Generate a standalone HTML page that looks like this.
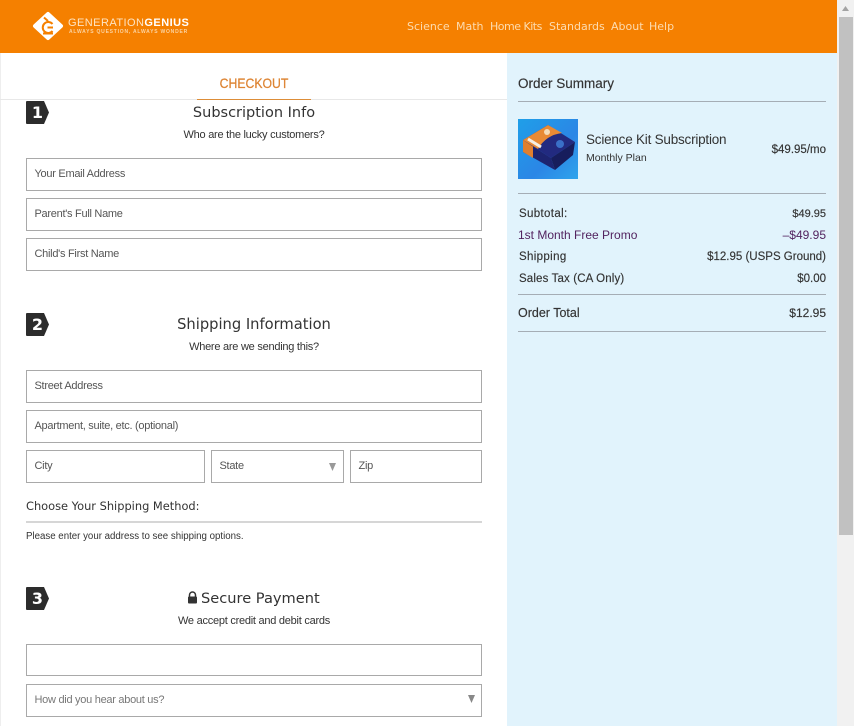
<!DOCTYPE html>
<html><head><meta charset="utf-8"><title>Checkout</title>
<style>
html,body{margin:0;padding:0;width:854px;height:726px;overflow:hidden;background:#fff;font-family:"Liberation Sans",sans-serif;color:#333}
.a{position:absolute;white-space:nowrap}
.inp{position:absolute;box-sizing:border-box;height:33px;border:1px solid #a9a9a9;background:#fff;font-size:11px;letter-spacing:-.28px;line-height:30px;padding-left:7.5px;color:#555}
.d{line-height:31px}
.h{position:absolute;left:0;width:508px;text-align:center;font-family:"DejaVu Sans",sans-serif;font-size:14.5px;color:#333;white-space:nowrap}
.s{position:absolute;left:0;width:508px;text-align:center;font-size:11px;letter-spacing:-.25px;color:#333;white-space:nowrap}
.nav{position:absolute;top:20px;font-family:"DejaVu Sans",sans-serif;font-size:11px;color:#fddcb0;white-space:nowrap}
.ln{position:absolute;left:518px;width:308px;height:1px;background:#a5adb5}
.l{position:absolute;left:519px;font-size:11.5px;letter-spacing:.35px;color:#333;white-space:nowrap;-webkit-text-stroke:.15px #333}
.r{position:absolute;right:28px;font-size:11.5px;color:#333;white-space:nowrap;-webkit-text-stroke:.15px #333}
</style></head><body>
<div class="a" style="left:0;top:0;width:1px;height:726px;background:#eee"></div>
<div class="a" style="left:507px;top:53px;width:330px;height:673px;background:#e1f3fc"></div>
<div class="a" style="left:0;top:0;width:837px;height:53px;background:#f58000"></div>
<div class="a" style="left:837px;top:0;width:17px;height:726px;background:#f1f1f1"></div>
<div class="a" style="left:839px;top:17px;width:14px;height:518px;background:#c1c1c1"></div>
<svg class="a" style="left:837px;top:0" width="17" height="17"><path d="M5 11L8.500 6L12 11Z" fill="#a3a3a3"/></svg>

<svg class="a" style="left:32px;top:11px" width="32" height="30" viewBox="0 0 32 30"><path d="M16 3L29 15L16 27L3 15Z" fill="#fff" stroke="#fff" stroke-width="4" stroke-linejoin="round"/><path d="M12 6.500L16 10M20.500 13A5.500 5.500 0 1 0 20.500 20M15.500 16.500H21M11 22.500H21" fill="none" stroke="#f58000" stroke-width="2"/></svg>
<div class="a" style="left:68px;top:16px;font-size:11px;line-height:14px;letter-spacing:.45px;color:#fff"><span style="color:#fde3c2">GENERATION</span><b>GENIUS</b></div>
<div class="a" style="left:69px;top:29px;font-size:5px;line-height:7px;letter-spacing:.78px;font-weight:bold;color:#fbd3a2">ALWAYS QUESTION, ALWAYS WONDER</div>
<div class="nav" style="left:407px">Science</div>
<div class="nav" style="left:456px">Math</div>
<div class="nav" style="left:490px;letter-spacing:-.5px">Home Kits</div>
<div class="nav" style="left:549px">Standards</div>
<div class="nav" style="left:611px">About</div>
<div class="nav" style="left:649px">Help</div>

<div class="a" style="left:0;top:99px;width:507px;height:1px;background:#e8e8e8"></div>
<div class="a" style="left:197px;top:99px;width:114px;height:1px;background:#dd8d38"></div>
<div class="a" style="left:197px;top:75px;width:114px;text-align:center;font-size:14px;line-height:16px;color:#dd8433;transform:scaleX(.875);-webkit-text-stroke:.25px #dd8433">CHECKOUT</div>

<svg class="a" style="left:26px;top:101px" width="24" height="23"><path d="M1 0H18L23 11.500L18 23H1Q0 23 0 22V1Q0 0 1 0Z" fill="#2c2c2c"/></svg>
<div class="a" style="left:26px;top:101px;width:23px;text-align:center;font:bold 16px/23px 'DejaVu Sans',sans-serif;color:#fff">1</div>
<div class="h" style="top:104px;line-height:18px">Subscription Info</div>
<div class="s" style="top:128px;line-height:14px">Who are the lucky customers?</div>
<div class="inp" style="left:26px;top:158px;width:456px">Your Email Address</div>
<div class="inp d" style="left:26px;top:198px;width:456px">Parent's Full Name</div>
<div class="inp d" style="left:26px;top:238px;width:456px">Child's First Name</div>

<svg class="a" style="left:26px;top:313px" width="24" height="23"><path d="M1 0H18L23 11.500L18 23H1Q0 23 0 22V1Q0 0 1 0Z" fill="#2c2c2c"/></svg>
<div class="a" style="left:26px;top:313px;width:23px;text-align:center;font:bold 16px/23px 'DejaVu Sans',sans-serif;color:#fff">2</div>
<div class="h" style="top:316px;line-height:18px;font-size:14.7px">Shipping Information</div>
<div class="s" style="top:340px;line-height:14px">Where are we sending this?</div>
<div class="inp" style="left:26px;top:370px;width:456px">Street Address</div>
<div class="inp d" style="left:26px;top:410px;width:456px">Apartment, suite, etc. (optional)</div>
<div class="inp d" style="left:26px;top:450px;width:179px">City</div>
<div class="inp d" style="left:211px;top:450px;width:133px">State</div>
<svg class="a" style="left:329px;top:463px" width="8" height="8"><path d="M0 0H7L3.500 8Z" fill="#999"/></svg>
<div class="inp d" style="left:350px;top:450px;width:132px">Zip</div>
<div class="a" style="left:26px;top:499px;font:11.400px/14px 'DejaVu Sans',sans-serif;color:#333">Choose Your Shipping Method:</div>
<div class="a" style="left:26px;top:521px;width:456px;height:2px;background:#d6d6d6"></div>
<div class="a" style="left:26px;top:530px;font-size:9.700px;line-height:14px;color:#333">Please enter your address to see shipping options.</div>

<svg class="a" style="left:26px;top:587px" width="24" height="23"><path d="M1 0H18L23 11.500L18 23H1Q0 23 0 22V1Q0 0 1 0Z" fill="#2c2c2c"/></svg>
<div class="a" style="left:26px;top:587px;width:23px;text-align:center;font:bold 16px/23px 'DejaVu Sans',sans-serif;color:#fff">3</div>
<svg class="a" style="left:187px;top:591px" width="11" height="13"><path d="M2.500 6V4A3 3 0 0 1 8.500 4V6" fill="none" stroke="#333" stroke-width="1.500"/><rect x="1" y="5.500" width="9" height="7" rx="1" fill="#333"/></svg>
<div class="a" style="left:201px;top:590px;font:14.600px/18px 'DejaVu Sans',sans-serif;color:#333">Secure Payment</div>
<div class="s" style="top:614px;line-height:14px">We accept credit and debit cards</div>
<div class="inp" style="left:26px;top:644px;width:456px;height:32px"></div>
<div class="inp" style="left:26px;top:684px;width:456px;color:#777">How did you hear about us?</div>
<svg class="a" style="left:468px;top:695px" width="8" height="8"><path d="M0 0H7L3.500 8Z" fill="#888"/></svg>

<div class="a" style="left:518px;top:75px;font-size:13.500px;line-height:17px;color:#333;-webkit-text-stroke:.15px #333">Order Summary</div>
<div class="ln" style="top:101px"></div>
<svg class="a" style="left:518px;top:119px" width="60" height="60" viewBox="0 0 60 60"><defs><linearGradient id="g" x1="0" y1="0" x2="1" y2="1"><stop offset="0" stop-color="#1f9fe8"/><stop offset=".6" stop-color="#2b86e6"/><stop offset="1" stop-color="#2fa4ec"/></linearGradient></defs><rect width="60" height="60" fill="url(#g)"/><path d="M5 21L30 6L57 23L33 39Z" fill="#222a80"/><path d="M5 21L30 6L44 14Q28 16 20 30Z" fill="#e98a35"/><path d="M5 21L33 39L37 51L5 33Z" fill="#1d2470"/><path d="M5 21L15 27.500V39L5 33Z" fill="#e07f2e"/><path d="M33 39L57 23L55 36L37 51Z" fill="#171d5c"/><path d="M10 20L23 28" stroke="#f4efe4" stroke-width="3"/><circle cx="29" cy="13" r="3" fill="#f6dcb8"/><circle cx="42" cy="25" r="4" fill="#3a70c8"/></svg>
<div class="a" style="left:586px;top:132px;font-size:13.500px;line-height:16px;color:#333;letter-spacing:-.22px">Science Kit Subscription</div>
<div class="a" style="left:586px;top:152px;font-size:10.500px;line-height:13px;color:#333">Monthly Plan</div>
<div class="r" style="top:143px;line-height:14px">$49.95/mo</div>
<div class="ln" style="top:193px"></div>
<div class="l" style="top:207px;line-height:14px">Subtotal:</div><div class="r" style="top:207px;line-height:14px;font-size:11px">$49.95</div>
<div class="l" style="left:518px;top:228px;line-height:14px;font-size:12px;letter-spacing:0;color:#52235f;-webkit-text-stroke:0">1st Month Free Promo</div><div class="r" style="top:228px;line-height:14px;font-size:12px;color:#52235f;-webkit-text-stroke:0">–$49.95</div>
<div class="l" style="top:250px;line-height:14px">Shipping</div><div class="r" style="top:250px;line-height:14px">$12.95 (USPS Ground)</div>
<div class="l" style="top:272px;line-height:14px;letter-spacing:.14px">Sales Tax (CA Only)</div><div class="r" style="top:272px;line-height:14px">$0.00</div>
<div class="ln" style="top:294px"></div>
<div class="a" style="left:518px;top:306px;font-size:12.500px;line-height:15px;color:#333;-webkit-text-stroke:.15px #333">Order Total</div><div class="r" style="top:306px;font-size:12px;line-height:15px">$12.95</div>
<div class="ln" style="top:331px"></div>
</body></html>
